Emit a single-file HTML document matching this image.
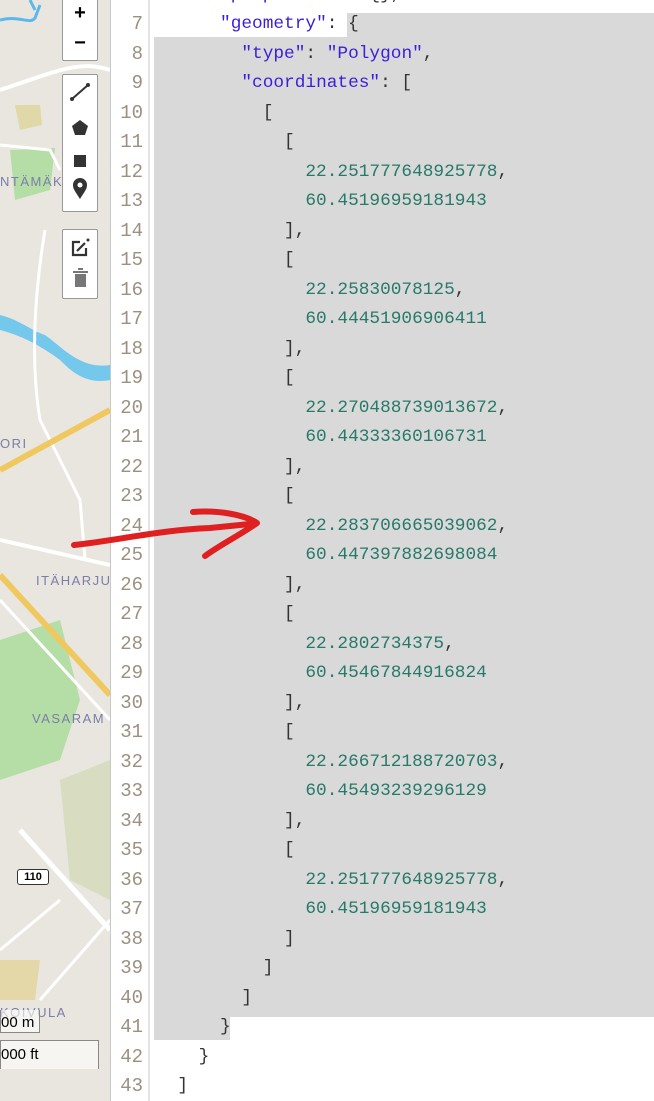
<!DOCTYPE html>
<html><head><meta charset="utf-8"><style>
html,body{margin:0;padding:0;width:654px;height:1101px;overflow:hidden;background:#fff;font-family:"Liberation Mono",monospace}
#map{position:absolute;left:0;top:0;width:110px;height:1101px;background:#e9e6df;overflow:hidden;border-right:1px solid #c8c8c8}
#gut{position:absolute;left:111px;top:0;width:37px;height:1101px;background:#fff;border-right:2px solid #e4e4e4}
.ln{position:absolute;right:5px;font-size:19px;color:#9c9080;width:40px;text-align:right}
.sel{position:absolute;background:#d9d9d9}
.cl{position:absolute;left:156px;font-size:17.8px;white-space:pre;color:#333;line-height:20px}
.k{color:#3b1fd8}.n{color:#277a68}
.ctl{position:absolute;left:62px;width:34px;background:#fff;border:1.5px solid #999;border-radius:2px}
.lbl{position:absolute;font-family:"Liberation Sans",sans-serif;color:#7a7ea8;font-size:13px;letter-spacing:1.5px}
</style></head><body>
<div id="map">
<svg width="110" height="1101" style="position:absolute;left:0;top:0">
<path d="M0,20 C20,15 30,25 35,18 L40,5 M30,0 L35,10" stroke="#5cb8ec" stroke-width="3" fill="none"/>
<path d="M0,315 C20,320 30,330 45,335 C60,345 80,370 110,365 L110,380 C85,385 70,370 60,360 C40,345 20,335 0,330Z" fill="#74c8ec"/>
<path d="M15,105 L40,105 L42,125 L20,130Z" fill="#e0d8a8"/>
<path d="M10,150 L55,148 L50,190 L15,200Z" fill="#a8dc98" opacity=".8"/>
<path d="M0,640 L60,620 L80,700 L60,760 L0,780Z" fill="#a8dc98" opacity=".8"/>
<path d="M60,780 L110,760 L110,900 L70,880Z" fill="#d8dcc0"/>
<path d="M0,960 L40,960 L35,1000 L0,1000Z" fill="#e4d8a8"/>
<path d="M110,70 C80,60 60,70 0,90" stroke="#fff" stroke-width="4" fill="none"/>
<path d="M0,145 L50,150 L60,170" stroke="#fff" stroke-width="3" fill="none"/>
<path d="M45,230 C35,290 30,360 40,420 L80,500 L85,560" stroke="#fff" stroke-width="3" fill="none"/>
<path d="M110,410 L0,470" stroke="#f0c860" stroke-width="6" fill="none"/>
<path d="M0,540 L110,565" stroke="#fff" stroke-width="4" fill="none"/>
<path d="M0,575 L110,695" stroke="#f0c860" stroke-width="6" fill="none"/>
<path d="M0,600 L110,720" stroke="#fff" stroke-width="3" fill="none"/>
<path d="M20,830 L110,930" stroke="#fff" stroke-width="5" fill="none"/>
<path d="M0,950 L60,900 M40,1000 L110,920" stroke="#fff" stroke-width="3" fill="none"/>
</svg>
<div class="lbl" style="left:0;top:174px">NTÄMÄK</div>
<div class="lbl" style="left:0;top:436px">ORI</div>
<div class="lbl" style="left:36px;top:573px">ITÄHARJU</div>
<div class="lbl" style="left:32px;top:711px">VASARAM</div>
<div class="lbl" style="left:0;top:1005px">KOIVULA</div>
<div style="position:absolute;left:17px;top:869px;width:30px;height:14px;border:1.5px solid #333;border-radius:3px;background:#fff;font:bold 11px 'Liberation Sans',sans-serif;text-align:center;line-height:14px">110</div>
<div style="position:absolute;left:0;top:1010px;width:38px;height:22px;border:1px solid #888;border-top:none;background:rgba(255,255,255,.6);font:15px 'Liberation Sans',sans-serif;line-height:26px">00 m</div>
<div style="position:absolute;left:0;top:1040px;width:97px;height:28px;border:1px solid #888;border-bottom:none;background:rgba(255,255,255,.6);font:15px 'Liberation Sans',sans-serif;line-height:28px">000 ft</div>
<div class="ctl" style="top:-3px;height:62px;font:bold 20px 'Liberation Sans',sans-serif;text-align:center;line-height:30px">+<br>−</div>
<div class="ctl" style="top:74px;height:136px">
<svg width="34" height="136"><path d="M9,24 L25,10" stroke="#333" stroke-width="2"/><circle cx="9" cy="24" r="2" fill="#333"/><circle cx="25" cy="10" r="2" fill="#333"/>
<path d="M17,45 L25,51 L22,60 L12,60 L9,51Z" fill="#333"/><rect x="11" y="80" width="12" height="12" fill="#333"/>
<path d="M17,124 C12,116 10,114 10,110 A7,7 0 0 1 24,110 C24,114 22,116 17,124Z" fill="#333"/><circle cx="17" cy="110" r="2.5" fill="#fff"/></svg></div>
<div class="ctl" style="top:229px;height:68px">
<svg width="34" height="68"><path d="M17,12 H10 V25 H23 V18" stroke="#333" stroke-width="2.2" fill="none"/><path d="M14,21 L22,13" stroke="#333" stroke-width="2.2"/><circle cx="25" cy="10" r="1.5" fill="#333"/>
<rect x="12" y="44" width="11" height="13" fill="#777"/><rect x="10" y="41" width="15" height="2" fill="#777"/><rect x="15" y="38" width="5" height="2" fill="#777"/></svg></div>
</div>
<div id="gut"></div>
<div class="sel" style="left:347px;top:13px;width:307px;height:25px"></div>
<div class="sel" style="left:154px;top:37px;width:500px;height:980px"></div>
<div class="sel" style="left:154px;top:1016px;width:76px;height:24px"></div>
<div id="lines"></div>
<script>
var L=[
[6,''],
[7,'      <span class="k">"geometry"</span>: {'],
[8,'        <span class="k">"type"</span>: <span class="k">"Polygon"</span>,'],
[9,'        <span class="k">"coordinates"</span>: ['],
[10,'          ['],[11,'            ['],
[12,'              <span class="n">22.251777648925778</span>,'],[13,'              <span class="n">60.45196959181943</span>'],
[14,'            ],'],[15,'            ['],
[16,'              <span class="n">22.25830078125</span>,'],[17,'              <span class="n">60.44451906906411</span>'],
[18,'            ],'],[19,'            ['],
[20,'              <span class="n">22.270488739013672</span>,'],[21,'              <span class="n">60.44333360106731</span>'],
[22,'            ],'],[23,'            ['],
[24,'              <span class="n">22.283706665039062</span>,'],[25,'              <span class="n">60.447397882698084</span>'],
[26,'            ],'],[27,'            ['],
[28,'              <span class="n">22.2802734375</span>,'],[29,'              <span class="n">60.45467844916824</span>'],
[30,'            ],'],[31,'            ['],
[32,'              <span class="n">22.266712188720703</span>,'],[33,'              <span class="n">60.45493239296129</span>'],
[34,'            ],'],[35,'            ['],
[36,'              <span class="n">22.251777648925778</span>,'],[37,'              <span class="n">60.45196959181943</span>'],
[38,'            ]'],[39,'          ]'],[40,'        ]'],[41,'      }'],[42,'    }'],[43,'  ]']];
var h='';
L.forEach(function(a){var y=25+(a[0]-7)*29.5;
h+='<div class="ln" style="left:103px;top:'+(y-12)+'px">'+a[0]+'</div>';
var t=a[1];if(a[0]==6)t='      <span class="k">"properties"</span>: {},';
h+='<div class="cl" style="top:'+(y-11)+'px">'+t+'</div>';});
document.getElementById('lines').innerHTML=h;
</script>
<svg width="654" height="1101" style="position:absolute;left:0;top:0;pointer-events:none">
<path d="M74,545 C120,540 160,530 210,528 L250,524" stroke="#e02020" stroke-width="6" fill="none" stroke-linecap="round"/>
<path d="M193,512 C220,510 245,515 257,523 C240,535 220,545 205,556" stroke="#e02020" stroke-width="6" fill="none" stroke-linecap="round" stroke-linejoin="round"/>
</svg>
</body></html>
